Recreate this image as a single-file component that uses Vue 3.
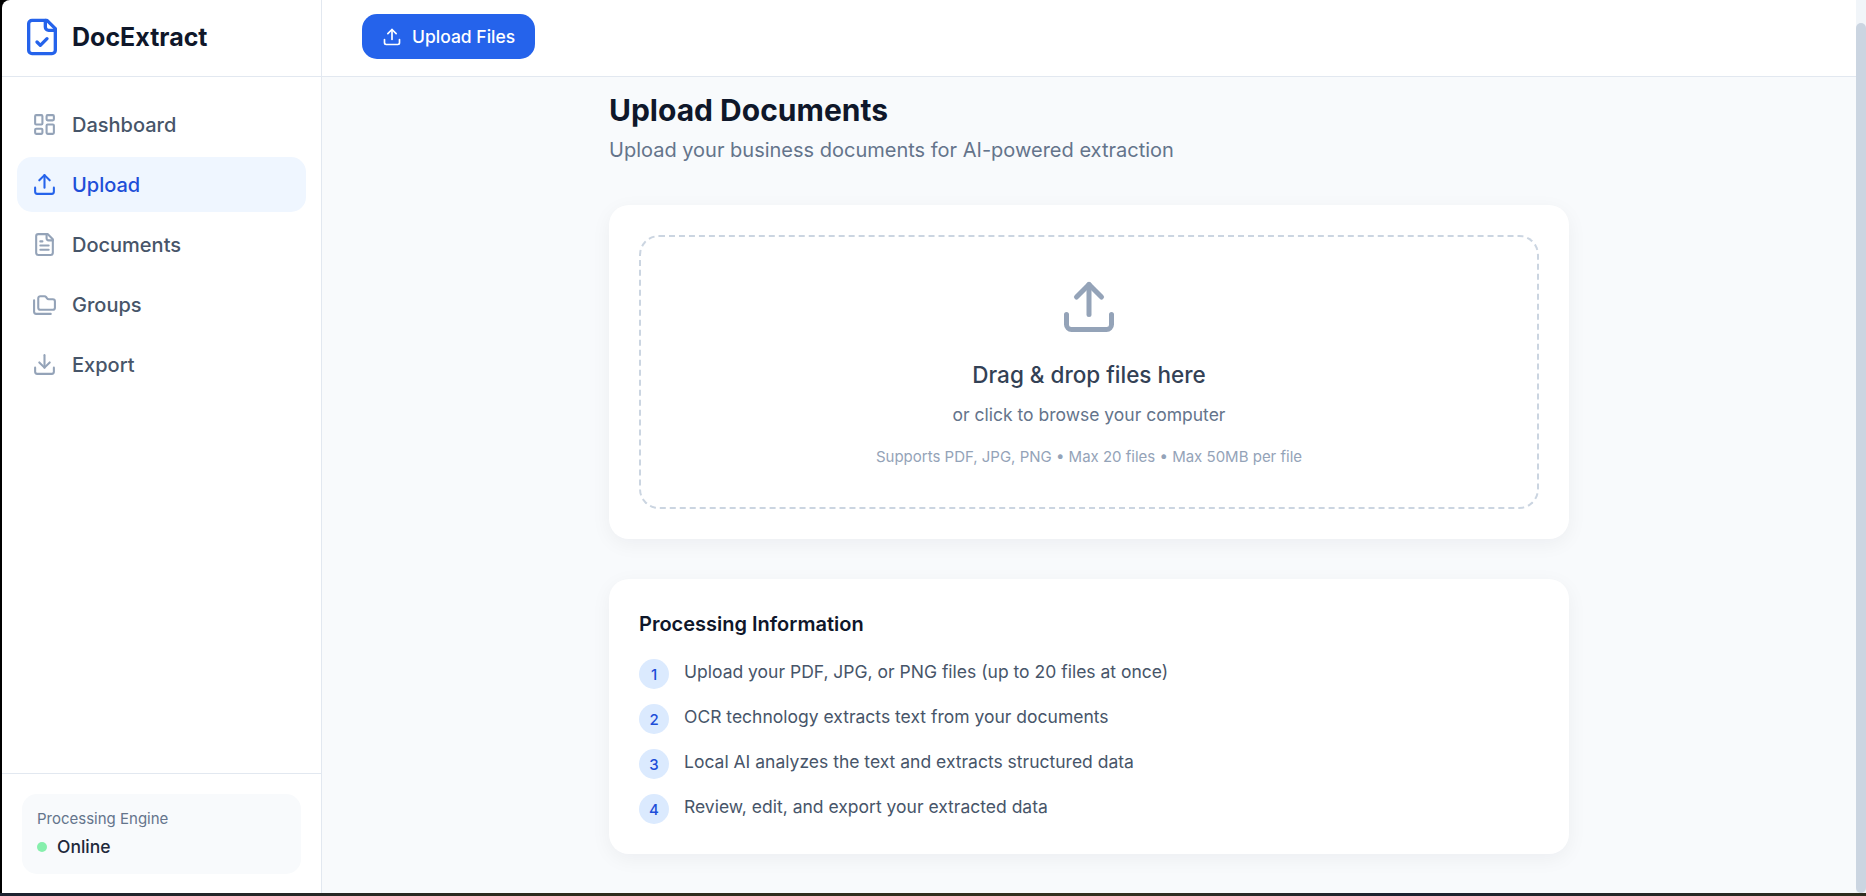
<script setup>
const nav = [
  { label: 'Dashboard', icon: 'dash' },
  { label: 'Upload', icon: 'upload', active: true },
  { label: 'Documents', icon: 'doc' },
  { label: 'Groups', icon: 'folders' },
  { label: 'Export', icon: 'download' },
]
const steps = [
  'Upload your PDF, JPG, or PNG files (up to 20 files at once)',
  'OCR technology extracts text from your documents',
  'Local AI analyzes the text and extracts structured data',
  'Review, edit, and export your extracted data',
]
</script>

<template>
  <div class="window">
    <div class="row">
      <aside class="sidebar">
        <div class="brand">
          <svg class="logo" viewBox="0 0 24 24" fill="none" stroke="currentColor" stroke-width="2" stroke-linecap="round" stroke-linejoin="round">
            <path d="M15 2H6a2 2 0 0 0-2 2v16a2 2 0 0 0 2 2h12a2 2 0 0 0 2-2V7Z" />
            <path d="M14 2v4a2 2 0 0 0 2 2h4" />
            <path d="m9 15 2 2 4-4" />
          </svg>
          <span class="brand-name">DocExtract</span>
        </div>
        <nav class="nav">
          <a v-for="item in nav" :key="item.label" class="nav-item" :class="{ active: item.active }">
            <svg class="nav-icon" viewBox="0 0 24 24" fill="none" stroke="currentColor" stroke-width="2" stroke-linecap="round" stroke-linejoin="round">
              <template v-if="item.icon === 'dash'">
                <rect width="7" height="9" x="3" y="3" rx="1" />
                <rect width="7" height="5" x="14" y="3" rx="1" />
                <rect width="7" height="9" x="14" y="12" rx="1" />
                <rect width="7" height="5" x="3" y="16" rx="1" />
              </template>
              <template v-else-if="item.icon === 'upload'">
                <path d="M21 15v4a2 2 0 0 1-2 2H5a2 2 0 0 1-2-2v-4" />
                <polyline points="17 8 12 3 7 8" />
                <line x1="12" x2="12" y1="3" y2="15" />
              </template>
              <template v-else-if="item.icon === 'doc'">
                <path d="M15 2H6a2 2 0 0 0-2 2v16a2 2 0 0 0 2 2h12a2 2 0 0 0 2-2V7Z" />
                <path d="M14 2v4a2 2 0 0 0 2 2h4" />
                <path d="M10 9H8" />
                <path d="M16 13H8" />
                <path d="M16 17H8" />
              </template>
              <template v-else-if="item.icon === 'folders'">
                <path d="M20 17a2 2 0 0 0 2-2V9a2 2 0 0 0-2-2h-3.9a2 2 0 0 1-1.69-.9l-.81-1.2a2 2 0 0 0-1.67-.9H8a2 2 0 0 0-2 2v9a2 2 0 0 0 2 2Z" />
                <path d="M2 8v11a2 2 0 0 0 2 2h14" />
              </template>
              <template v-else>
                <path d="M21 15v4a2 2 0 0 1-2 2H5a2 2 0 0 1-2-2v-4" />
                <polyline points="7 10 12 15 17 10" />
                <line x1="12" x2="12" y1="15" y2="3" />
              </template>
            </svg>
            <span>{{ item.label }}</span>
          </a>
        </nav>
        <div class="engine-wrap">
          <div class="engine">
            <div class="engine-label">Processing Engine</div>
            <div class="engine-status"><span class="dot"></span>Online</div>
          </div>
        </div>
      </aside>

      <div class="main">
        <header class="topbar">
          <button class="upload-btn">
            <svg class="btn-icon" viewBox="0 0 24 24" fill="none" stroke="currentColor" stroke-width="2" stroke-linecap="round" stroke-linejoin="round">
              <path d="M21 15v4a2 2 0 0 1-2 2H5a2 2 0 0 1-2-2v-4" />
              <polyline points="17 8 12 3 7 8" />
              <line x1="12" x2="12" y1="3" y2="15" />
            </svg>
            Upload Files
          </button>
        </header>
        <main class="content">
          <div class="column">
            <h1 class="title">Upload Documents</h1>
            <p class="subtitle">Upload your business documents for AI-powered extraction</p>

            <section class="card drop-card">
              <div class="dropzone">
                <svg class="drop-icon" viewBox="0 0 24 24" fill="none" stroke="currentColor" stroke-width="2" stroke-linecap="round" stroke-linejoin="round">
                  <path d="M21 15v4a2 2 0 0 1-2 2H5a2 2 0 0 1-2-2v-4" />
                  <polyline points="17 8 12 3 7 8" />
                  <line x1="12" x2="12" y1="3" y2="15" />
                </svg>
                <div class="drop-title">Drag &amp; drop files here</div>
                <div class="drop-sub">or click to browse your computer</div>
                <div class="drop-note">Supports PDF, JPG, PNG • Max 20 files • Max 50MB per file</div>
              </div>
            </section>

            <section class="card info-card">
              <h2 class="info-title">Processing Information</h2>
              <ol class="steps">
                <li v-for="(s, i) in steps" :key="i" class="step">
                  <span class="num">{{ i + 1 }}</span>
                  <span class="step-text">{{ s }}</span>
                </li>
              </ol>
            </section>
          </div>
        </main>
      </div>

      <div class="scrollbar"><div class="thumb"></div></div>
    </div>
    <div class="desktop-strip"></div>
  </div>
</template>

<style>
html, body { margin: 0; background: #000; overflow: hidden; }
</style>

<style scoped>
.window {
  width: 1866px;
  height: 896px;
  display: flex;
  flex-direction: column;
  background: #000;
  font-family: Inter, "Liberation Sans", sans-serif;
  overflow: hidden;
}
.row {
  flex: 1;
  min-height: 0;
  display: flex;
  padding-left: 2px;
}
.desktop-strip {
  height: 3px;
  background: linear-gradient(90deg, #1c2230 0%, #2d2b1c 30%, #33301f 60%, #1b2130 75%, #2d2c1d 100%);
}
.sidebar {
  width: 320px;
  flex: none;
  background: #fff;
  border-right: 1px solid #e2e8f0;
  box-sizing: border-box;
  display: flex;
  flex-direction: column;
  border-top-left-radius: 8px;
}
.brand {
  height: 77px;
  box-sizing: border-box;
  border-bottom: 1px solid #e2e8f0;
  display: flex;
  align-items: center;
  padding: 0 0 2px 20px;
  gap: 10px;
  color: #2563eb;
}
.logo { width: 40px; height: 40px; }
.brand-name {
  font-size: 25px;
  line-height: 30px;
  font-weight: 700;
  color: #0f172a;
}
.nav {
  flex: 1;
  padding: 20px 15px 0;
  display: flex;
  flex-direction: column;
  gap: 5px;
}
.nav-item {
  height: 55px;
  display: flex;
  align-items: center;
  gap: 15px;
  padding-left: 15px;
  border-radius: 15px;
  font-size: 20px;
  font-weight: 500;
  color: #475569;
}
.nav-item.active {
  background: #eff6ff;
  color: #1d4ed8;
}
.nav-icon { width: 25px; height: 25px; flex: none; color: #94a3b8; }
.nav-item.active .nav-icon { color: #2563eb; }
.engine-wrap {
  border-top: 1px solid #e2e8f0;
  padding: 20px 20px 19px;
}
.engine {
  height: 80px;
  box-sizing: border-box;
  background: #f8fafc;
  border-radius: 15px;
  padding: 15px 15px 0;
}
.engine-label {
  font-size: 15px;
  line-height: 20px;
  color: #64748b;
}
.engine-status {
  margin-top: 6px;
  display: flex;
  align-items: center;
  gap: 10px;
  font-size: 17.5px;
  line-height: 24px;
  font-weight: 500;
  color: #1e293b;
}
.dot { width: 10px; height: 10px; border-radius: 50%; background: #86efac; }
.main {
  flex: 1;
  min-width: 0;
  display: flex;
  flex-direction: column;
  background: #f8fafc;
}
.topbar {
  height: 77px;
  flex: none;
  box-sizing: border-box;
  background: #fff;
  border-bottom: 1px solid #e2e8f0;
  display: flex;
  align-items: flex-start;
  padding: 14px 40px 0;
}
.upload-btn {
  height: 45px;
  border: 0;
  border-radius: 15px;
  background: #2563eb;
  color: #fff;
  font: 500 17.5px Inter, sans-serif;
  display: flex;
  align-items: center;
  gap: 10px;
  padding: 0 20px;
}
.btn-icon { width: 20px; height: 20px; flex: none; }
.content { flex: 1; min-height: 0; overflow: hidden; }
.column { width: 960px; margin: 0 auto; padding-top: 14px; }
.title {
  margin: 0;
  font-size: 30px;
  line-height: 38px;
  font-weight: 700;
  color: #0f172a;
}
.subtitle {
  margin: 7px 0 0;
  font-size: 20px;
  line-height: 28px;
  color: #64748b;
}
.card {
  background: #fff;
  border-radius: 20px;
  box-shadow: 0 5px 20px rgba(15, 23, 42, 0.05);
}
.drop-card { margin-top: 41px; padding: 30px; height: 334px; box-sizing: border-box; }
.dropzone {
  height: 274px;
  box-sizing: border-box;
  border: 2px dashed #cbd5e1;
  border-radius: 20px;
  display: flex;
  flex-direction: column;
  align-items: center;
  padding-top: 40px;
}
.drop-icon { width: 60px; height: 60px; color: #94a3b8; flex: none; }
.drop-title {
  margin-top: 23px;
  font-size: 22.5px;
  line-height: 30px;
  font-weight: 500;
  color: #334155;
}
.drop-sub {
  margin-top: 13px;
  font-size: 17.5px;
  line-height: 24px;
  color: #64748b;
}
.drop-note {
  margin-top: 20px;
  font-size: 15px;
  line-height: 20px;
  color: #94a3b8;
}
.info-card { margin-top: 40px; height: 275px; box-sizing: border-box; padding: 31px 30px 0; }
.info-title {
  margin: 0;
  font-size: 20px;
  line-height: 28px;
  font-weight: 600;
  color: #0f172a;
}
.steps {
  list-style: none;
  margin: 21px 0 0;
  padding: 0;
  display: flex;
  flex-direction: column;
  gap: 15px;
}
.step { display: flex; gap: 15px; height: 30px; }
.num {
  width: 30px;
  height: 30px;
  flex: none;
  border-radius: 50%;
  background: #dbeafe;
  color: #1d4ed8;
  font-size: 15px;
  font-weight: 500;
  display: flex;
  align-items: center;
  justify-content: center;
}
.step-text {
  font-size: 17.5px;
  line-height: 26px;
  color: #475569;
}
.scrollbar {
  width: 10px;
  flex: none;
  background: #f1f5f9;
  padding-top: 23px;
  box-sizing: border-box;
  display: flex;
}
.thumb { flex: 1; background: #cbd5e1; border-radius: 5px; }
</style>
